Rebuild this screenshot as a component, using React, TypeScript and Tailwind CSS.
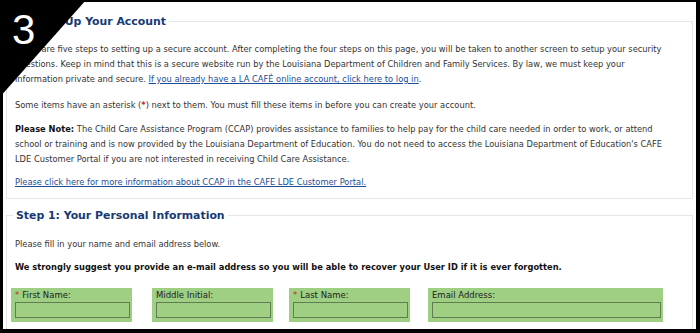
import React from 'react';

const body = "font-['DejaVu_Sans',Verdana,sans-serif]";

const Field = ({ label, required, w }: { label: string; required?: boolean; w: string }) => (
  <div className={`${w} bg-[#9ecf83] pl-[4px] pr-[2px] pt-[1px] pb-[4px]`}>
    <div className="text-[8.5px] leading-[13px] text-[#222] whitespace-nowrap">
      {required && <span className="text-[#c0262b] mr-[3px]">*</span>}
      {label}
    </div>
    <div className="h-[16px] border border-[#5f7d50] bg-[#9ecf83]" />
  </div>
);

export default function App() {
  return (
    <div className={`relative w-[700px] h-[333px] overflow-hidden bg-white border-black border-t-2 border-l-[3px] border-r-4 border-b-4 ${body} text-[8.3px] leading-[15px] text-[#333]`}>
      {/* corner badge */}
      <svg className="absolute top-[-2px] left-[-3px] z-10" width="90" height="100" viewBox="0 0 90 100">
        <polygon points="0,0 86,0 0,97" fill="#000" />
      </svg>
      <div className="absolute top-[7px] left-[9px] z-20 text-white text-[42px] leading-[42px] font-['Liberation_Sans',Arial,sans-serif]">3</div>

      <div className="px-[3px] pt-[12px]">
        <fieldset className="border border-[#e6e6e6] px-[8px] pb-[8px]">
          <legend className="-ml-[2px] px-[3px] text-[10.9px] leading-[15px] font-bold text-[#173a75]">Setting Up Your Account</legend>
          <p className="mt-[13px] whitespace-nowrap">
            There are five steps to setting up a secure account. After completing the four steps on this page, you will be taken to another screen to setup your security<br />
            questions. Keep in mind that this is a secure website run by the Louisiana Department of Children and Family Services. By law, we must keep your<br />
            information private and secure. <a className="text-[#1d4d97] underline">If you already have a LA CAFÉ online account, click here to log in</a>.
          </p>
          <p className="mt-[11px] whitespace-nowrap">
            Some items have an asterisk (<span className="text-[#d0202a] font-bold">*</span>) next to them. You must fill these items in before you can create your account.
          </p>
          <p className="mt-[9px] whitespace-nowrap">
            <b className="text-[#111]">Please Note:</b> The Child Care Assistance Program (CCAP) provides assistance to families to help pay for the child care needed in order to work, or attend<br />
            school or training and is now provided by the Louisiana Department of Education. You do not need to access the Louisiana Department of Education's CAFE<br />
            LDE Customer Portal if you are not interested in receiving Child Care Assistance.
          </p>
          <p className="mt-[8px] whitespace-nowrap">
            <a className="text-[#1d4d97] underline">Please click here for more information about CCAP in the CAFE LDE Customer Portal.</a>
          </p>
        </fieldset>

        <fieldset className="mt-[9px] border border-[#e6e6e6] px-[4px] pb-[10px] min-h-[140px]">
          <legend className="ml-[2px] px-[3px] text-[10.9px] leading-[15px] font-bold text-[#173a75]">Step 1: Your Personal Information</legend>
          <p className="mt-[14px] pl-[4px] whitespace-nowrap">Please fill in your name and email address below.</p>
          <p className="mt-[8px] pl-[4px] whitespace-nowrap font-bold text-[#111]">
            We strongly suggest you provide an e-mail address so you will be able to recover your User ID if it is ever forgotten.
          </p>
          <div className="mt-[13px] flex">
            <Field label="First Name:" required w="w-[121px]" />
            <div className="w-[20px]" />
            <Field label="Middle Initial:" w="w-[121px]" />
            <div className="w-[16px]" />
            <Field label="Last Name:" required w="w-[121px]" />
            <div className="w-[18px]" />
            <Field label="Email Address:" w="w-[235px]" />
          </div>
        </fieldset>
      </div>
    </div>
  );
}
